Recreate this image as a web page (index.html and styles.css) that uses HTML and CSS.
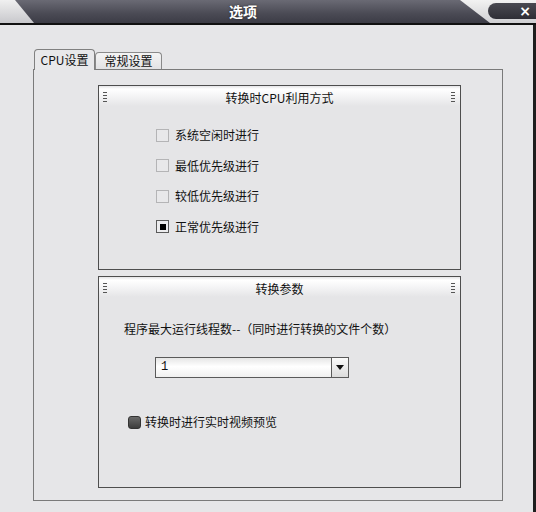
FILE: index.html
```html
<!DOCTYPE html>
<html lang="zh">
<head>
<meta charset="utf-8">
<title>选项</title>
<link rel="stylesheet" href="styles.css">
</head>
<body>
<div class="window">
  <div class="titlebar">
    <div class="wedge-left"></div>
    <div class="title">选项</div>
    <div class="wedge-right">
      <div class="close"><span>×</span></div>
    </div>
  </div>
  <div class="body">
    <div class="tabs">
      <div class="tab active">CPU设置</div>
      <div class="tab">常规设置</div>
    </div>
    <div class="panel">
      <div class="group group1">
        <div class="group-head">
          <svg class="grip" width="5" height="10" viewBox="0 0 5 10"><path d="M0 0.5H4M0 3.5H4M0 6.5H4M0 9.5H4" stroke="#555" stroke-width="1"/></svg>
          <span class="group-title">转换时CPU利用方式</span>
          <svg class="grip" width="5" height="10" viewBox="0 0 5 10"><path d="M0 0.5H4M0 3.5H4M0 6.5H4M0 9.5H4" stroke="#555" stroke-width="1"/></svg>
        </div>
        <div class="options">
          <div class="opt"><span class="cb"></span>系统空闲时进行</div>
          <div class="opt"><span class="cb"></span>最低优先级进行</div>
          <div class="opt"><span class="cb"></span>较低优先级进行</div>
          <div class="opt"><span class="cb on"><i></i></span>正常优先级进行</div>
        </div>
      </div>
      <div class="group group2">
        <div class="group-head">
          <svg class="grip" width="5" height="10" viewBox="0 0 5 10"><path d="M0 0.5H4M0 3.5H4M0 6.5H4M0 9.5H4" stroke="#555" stroke-width="1"/></svg>
          <span class="group-title">转换参数</span>
          <svg class="grip" width="5" height="10" viewBox="0 0 5 10"><path d="M0 0.5H4M0 3.5H4M0 6.5H4M0 9.5H4" stroke="#555" stroke-width="1"/></svg>
        </div>
        <div class="params">
          <div class="label">程序最大运行线程数--（同时进行转换的文件个数）</div>
          <div class="select">
            <span class="value">1</span>
            <span class="arrow"><svg width="8" height="5" viewBox="0 0 8 5"><path d="M0 0H8L4 5Z" fill="#111"/></svg></span>
          </div>
          <div class="preview"><span class="cb dark"></span>转换时进行实时视频预览</div>
        </div>
      </div>
    </div>
  </div>
</div>
</body>
</html>
```
FILE: styles.css
```css
* { box-sizing: border-box; }
html, body { margin: 0; padding: 0; }
body {
  width: 536px;
  height: 512px;
  overflow: hidden;
  font-family: "Noto Sans CJK SC", "Liberation Sans", sans-serif;
  font-size: 12px;
  color: #111;
  background: #e6e6e8;
}
.window {
  width: 536px;
  height: 512px;
  display: flex;
  flex-direction: column;
}
.titlebar {
  height: 25px;
  display: flex;
  background: linear-gradient(#6a6a74, #4a4a54 60%, #3c3c46);
  border-bottom: 2px solid #111;
}
.wedge-left {
  width: 34px;
  background: linear-gradient(#f0f0f0, #c8c8cc);
  clip-path: polygon(0 0, 15px 0, 34px 100%, 0 100%);
}
.title {
  flex: 1;
  text-align: center;
  color: #fff;
  font-weight: bold;
  font-size: 14px;
  line-height: 22px;
  padding-right: 8px;
  text-shadow: 0 0 2px #222;
}
.wedge-right {
  width: 76px;
  background: linear-gradient(#f2f2f2, #cfcfd2);
  clip-path: polygon(0 0, 100% 0, 100% 100%, 30px 100%);
  display: flex;
  justify-content: flex-end;
  align-items: flex-start;
}
.close {
  width: 48px;
  height: 16px;
  margin-top: 3px;
  border-radius: 8px 0 0 8px;
  background: linear-gradient(#4a4a52, #2e2e36);
  color: #fff;
  display: flex;
  justify-content: flex-end;
  align-items: center;
  padding-right: 5px;
}
.close span {
  font-family: "DejaVu Sans", sans-serif;
  font-weight: bold;
  font-size: 14px;
  line-height: 14px;
}
.body {
  flex: 1;
  background: #e6e6e8;
  border-right: 3px solid #1e1e1e;
  padding: 24px 31px 0 33px;
}
.tabs {
  display: flex;
  align-items: flex-end;
  height: 20px;
  padding-left: 1px;
}
.tab {
  width: 67px;
  height: 17px;
  border: 1px solid #8a8a8a;
  border-bottom: none;
  border-radius: 4px 4px 0 0;
  background: linear-gradient(#f4f4f4, #e2e2e4);
  text-align: center;
  line-height: 16px;
  font-size: 12px;
}
.tab.active {
  width: 61px;
  height: 21px;
  margin-bottom: -1px;
  position: relative;
  z-index: 1;
  background: #e8e8ea;
  line-height: 19px;
  border-color: #808080;
}
.panel {
  width: 470px;
  height: 432px;
  border: 1px solid #7a7a7a;
  background: #e6e6e8;
  padding: 15px 0 0 64px;
  display: flex;
  flex-direction: column;
  gap: 6px;
}
.group {
  width: 363px;
  border: 1px solid #4e4e4e;
  background: #e5e5e7;
  display: flex;
  flex-direction: column;
}
.group1 { height: 185px; }
.group2 { height: 212px; }
.group-head {
  height: 22px;
  display: flex;
  align-items: flex-start;
  justify-content: space-between;
  padding: 4px 4px 0 4px;
  background: linear-gradient(#e4e4e6, #ffffff 3px, #f6f6f7 9px, #e5e5e7 20px);
}
.grip { margin-top: 2px; }
.group-title {
  line-height: 14px;
  padding-top: 1px;
}
.options {
  padding: 20px 0 0 57px;
  display: flex;
  flex-direction: column;
  gap: 16.6px;
}
.opt {
  height: 14px;
  display: flex;
  align-items: center;
  gap: 6px;
  line-height: 14px;
}
.cb {
  width: 13px;
  height: 13px;
  border: 1px solid #b4b4b6;
  background: #e8e8ea;
  display: flex;
  align-items: center;
  justify-content: center;
  flex: none;
}
.cb.on { border-color: #5a5a5a; background: #ececee; }
.cb.on i {
  display: block;
  width: 6px;
  height: 6px;
  background: #000;
}
.cb.dark {
  border: 1px solid #333;
  border-radius: 3px;
  background: linear-gradient(#6a6a6a, #3c3c3c);
}
.params {
  padding: 22px 0 0 25px;
  display: flex;
  flex-direction: column;
}
.label {
  line-height: 16px;
}
.select {
  margin: 20px 0 0 31px;
  width: 194px;
  height: 21px;
  border: 1px solid #5a5a5a;
  background: linear-gradient(#e6e6e6, #ffffff 45%, #f0f0f0);
  display: flex;
}
.select .value {
  flex: 1;
  padding-left: 5px;
  line-height: 19px;
  font-family: "Liberation Mono", monospace;
  font-size: 12px;
}
.select .arrow {
  width: 17px;
  border-left: 1px solid #5a5a5a;
  display: flex;
  align-items: center;
  justify-content: center;
  background: linear-gradient(#fafafa, #dcdcdc);
}
.preview {
  margin: 36px 0 0 4px;
  display: flex;
  align-items: center;
  gap: 4px;
  line-height: 16px;
}
```
